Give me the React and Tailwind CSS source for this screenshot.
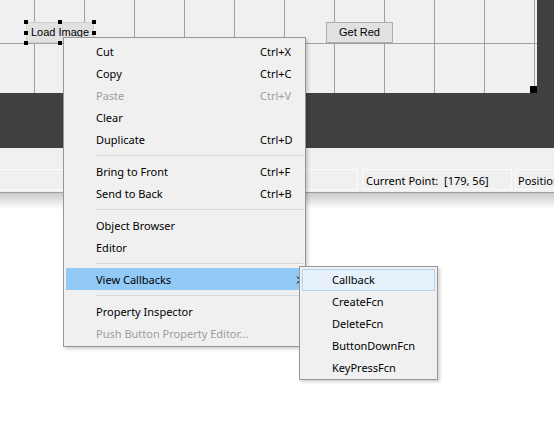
import React from 'react';

const FONT = "font-['Noto_Sans','Segoe_UI',sans-serif]";

const menuItems = [
  { label: 'Cut', shortcut: 'Ctrl+X' },
  { label: 'Copy', shortcut: 'Ctrl+C' },
  { label: 'Paste', shortcut: 'Ctrl+V', disabled: true },
  { label: 'Clear' },
  { label: 'Duplicate', shortcut: 'Ctrl+D' },
  { sep: true },
  { label: 'Bring to Front', shortcut: 'Ctrl+F' },
  { label: 'Send to Back', shortcut: 'Ctrl+B' },
  { sep: true },
  { label: 'Object Browser' },
  { label: 'Editor' },
  { sep: true },
  { label: 'View Callbacks', active: true, submenu: true },
  { sep: true },
  { label: 'Property Inspector' },
  { label: 'Push Button Property Editor...', disabled: true },
];

const subItems = ['Callback', 'CreateFcn', 'DeleteFcn', 'ButtonDownFcn', 'KeyPressFcn'];

// black selection handle around the selected push button
const Handle = ({ className }) => (
  <div className={`absolute w-[4px] h-[4px] bg-black ${className}`} />
);

const App = () => {
  return (
    <div className={`relative w-[554px] h-[421px] overflow-hidden bg-white ${FONT}`}>
      {/* Layout area */}
      <div className="flex h-[148px] bg-[#404040]">
        <div className="relative w-[537px] h-[93px] bg-[#f0f0f0] bg-[linear-gradient(to_right,#a0a0a0_1px,transparent_1px),linear-gradient(to_bottom,#a0a0a0_1px,transparent_1px)] bg-size-[50px_50px] bg-position-[34px_43px]">
          {/* Load Image (selected) */}
          <div className="absolute left-[26px] top-[22px] w-[68px] h-[21px] bg-[#e1e1e1] border border-[#cfcfcf] flex items-center justify-center font-['Liberation_Sans',Arial,sans-serif] text-[11px] text-black">
            Load Image
          </div>
          <Handle className="left-[24px] top-[20px]" />
          <Handle className="left-[58px] top-[20px]" />
          <Handle className="left-[92px] top-[20px]" />
          <Handle className="left-[24px] top-[31px]" />
          <Handle className="left-[92px] top-[31px]" />
          <Handle className="left-[24px] top-[41px]" />
          <Handle className="left-[58px] top-[41px]" />
          <Handle className="left-[92px] top-[41px]" />

          {/* Get Red */}
          <div className="absolute left-[326px] top-[22px] w-[67px] h-[21px] bg-[#e1e1e1] border border-[#adadad] flex items-center justify-center font-['Liberation_Sans',Arial,sans-serif] text-[11px] text-black">
            Get Red
          </div>

          {/* resize handle */}
          <div className="absolute right-0 bottom-0 w-[7px] h-[7px] bg-black" />
        </div>
      </div>

      {/* Status bar */}
      <div className="h-[45px] bg-[#f0f0f0] border-b border-[#a0a0a0] pt-[21px]">
        <div className="flex -ml-[10px] text-[11px] text-black whitespace-nowrap">
          <div className="shrink-0 w-[368px] h-[21px] border border-[#fbfbfb]" />
          <div className="shrink-0 ml-[4px] w-[150px] h-[21px] border border-[#fbfbfb] pl-[3px] pt-px leading-[19px] whitespace-pre">
            Current Point:  [179, 56]
          </div>
          <div className="shrink-0 ml-[3px] w-[100px] h-[21px] border border-[#fbfbfb] pl-[2px] pt-px leading-[19px]">
            Position: [0, 0]
          </div>
        </div>
      </div>
      <div className="h-[16px] bg-gradient-to-b from-[#cbcbcb] to-white" />

      {/* Context menu */}
      <div className="absolute left-[63px] top-[37px] w-[243px] bg-[#f0f0f0] border border-[#979797] p-[2px] text-[11px] shadow-[2px_2px_3px_rgba(0,0,0,0.18)]">
        {menuItems.map((item, i) =>
          item.sep ? (
            <div key={i} className="h-[10px] flex items-center">
              <div className="ml-[30px] w-full h-px bg-[#d7d7d7]" />
            </div>
          ) : (
            <div
              key={i}
              className={`relative flex items-center h-[22px] pl-[30px] pt-[2px] ${item.active ? 'bg-[#91c9f7]' : ''} ${item.disabled ? 'text-[#9d9d9d]' : 'text-black'}`}
            >
              <span className="w-[164px] whitespace-nowrap">{item.label}</span>
              {item.shortcut && <span>{item.shortcut}</span>}
              {item.submenu && (
                <svg className="absolute left-[230px] top-[8px]" width="5" height="8" viewBox="0 0 5 8">
                  <path d="M1 0.5 L4 4 L1 7.5" fill="none" stroke="#000" strokeWidth="1" />
                </svg>
              )}
            </div>
          )
        )}
      </div>

      {/* Submenu */}
      <div className="absolute left-[299px] top-[266px] w-[139px] bg-[#f0f0f0] border border-[#979797] px-[2px] pt-[2px] text-[11px] text-black shadow-[2px_2px_3px_rgba(0,0,0,0.18)]">
        {subItems.map((label, i) => (
          <div
            key={label}
            className={`flex items-center h-[22px] pl-[29px] pt-px border ${i === 0 ? 'bg-[#e6f1fb] border-[#b3d4f0]' : 'border-transparent'}`}
          >
            {label}
          </div>
        ))}
      </div>
    </div>
  );
};

export default App;
